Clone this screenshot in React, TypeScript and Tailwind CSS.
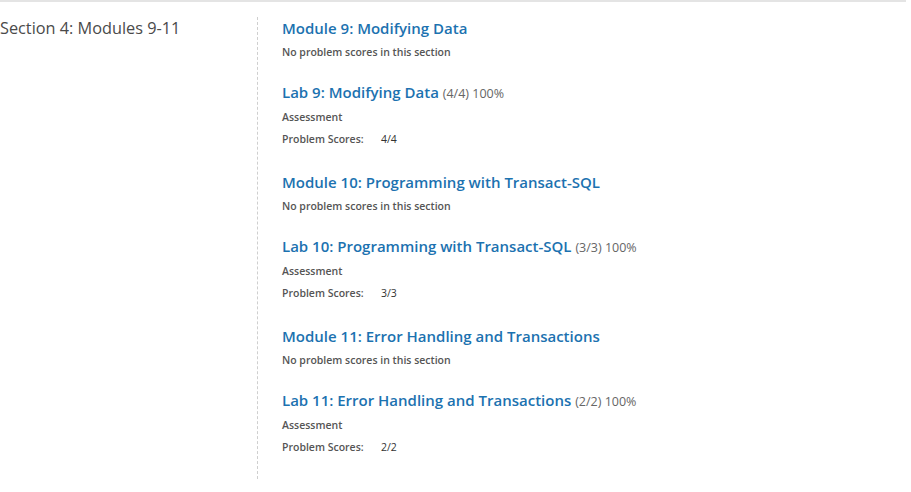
import React from "react";

type Item =
  | { kind: "module"; title: string }
  | { kind: "lab"; title: string; score: string; pct: string; ps: string };

const items: Item[] = [
  { kind: "module", title: "Module 9: Modifying Data" },
  { kind: "lab", title: "Lab 9: Modifying Data", score: "(4/4)", pct: "100%", ps: "4/4" },
  { kind: "module", title: "Module 10: Programming with Transact-SQL" },
  { kind: "lab", title: "Lab 10: Programming with Transact-SQL", score: "(3/3)", pct: "100%", ps: "3/3" },
  { kind: "module", title: "Module 11: Error Handling and Transactions" },
  { kind: "lab", title: "Lab 11: Error Handling and Transactions", score: "(2/2)", pct: "100%", ps: "2/2" },
];

export default function App() {
  return (
    <div
      className="w-[906px] border-t-2 border-[#e4e4e4] bg-white"
      style={{ fontFamily: '"Open Sans", "Liberation Sans", sans-serif' }}
    >
      <div className="flex">
        <div className="w-[257px] shrink-0 pt-[15px]">
          <h2 className="text-[16.3px] leading-[22px] font-normal text-[#4a4a4a]">
            Section 4: Modules 9-11
          </h2>
        </div>
        <div className="mt-[15px] flex-1 border-l border-dashed border-[#cfcfcf] pl-[24px] pb-[25px]">
          {items.map((it, i) =>
            it.kind === "module" ? (
              <div key={i} className={i === 0 ? "" : "mt-[25px]"}>
                <h3 className="text-[15px] leading-[22px] font-semibold text-[#1c72b0]">
                  {it.title}
                </h3>
                <p className="mt-[6px] text-[10.5px] leading-[14px] font-semibold text-[#555]">
                  No problem scores in this section
                </p>
              </div>
            ) : (
              <div key={i} className="mt-[22px]">
                <h3 className="text-[15px] leading-[22px] font-semibold text-[#1c72b0]">
                  {it.title}{" "}
                  <span className="text-[12.5px] leading-none font-normal text-[#666]">
                    {it.score} {it.pct}
                  </span>
                </h3>
                <p className="mt-[7px] text-[10.5px] leading-[14px] font-semibold text-[#555]">
                  Assessment
                </p>
                <div className="mt-[8px] flex text-[10.5px] leading-[14px]">
                  <span className="w-[99px] font-semibold text-[#555]">Problem Scores:</span>
                  <span className="text-[#333]">{it.ps}</span>
                </div>
              </div>
            )
          )}
        </div>
      </div>
    </div>
  );
}
